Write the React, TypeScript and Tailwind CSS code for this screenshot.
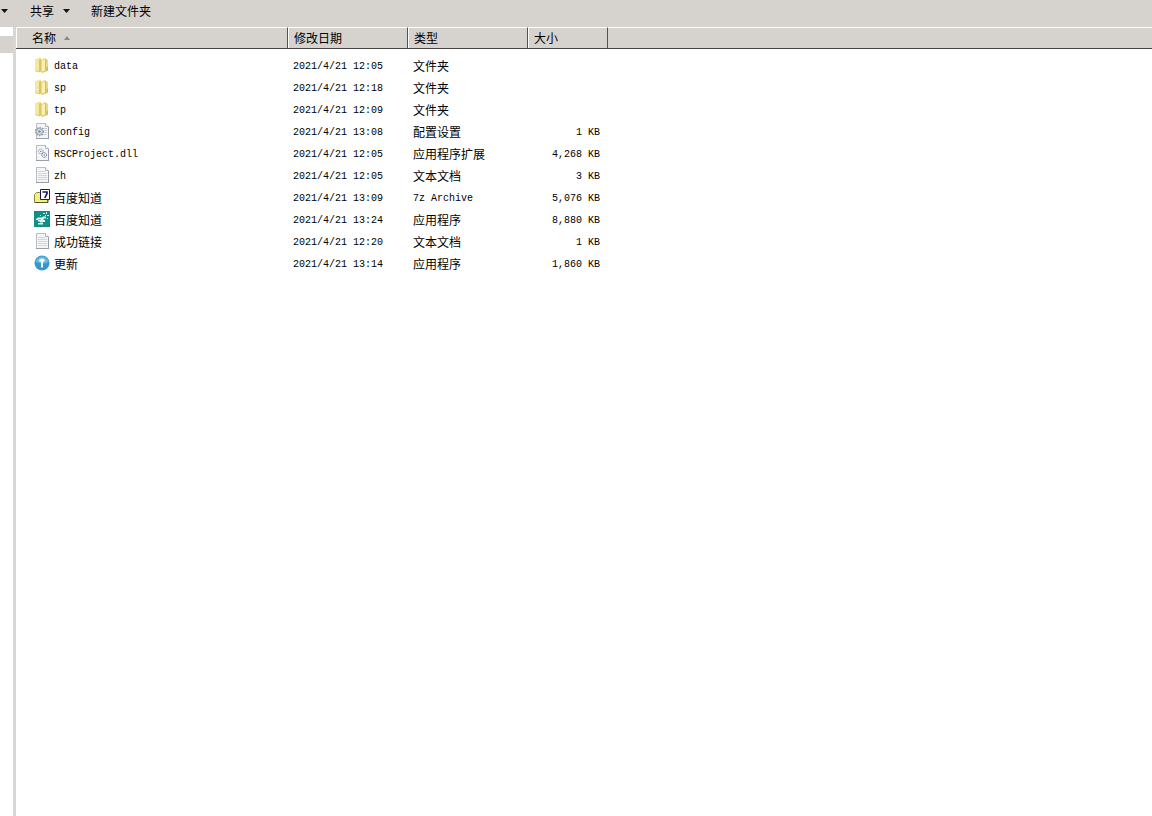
import { useState } from "react";
import { clsx } from "clsx";

/* File entry type */
interface FileEntry {
  icon: IconKind;
  name: string;
  modified: string;
  type: string;
  size: string;
}

type IconKind = "folder" | "config" | "dll" | "text" | "archive" | "app" | "update";

const files: FileEntry[] = [
  { icon: "folder", name: "data", modified: "2021/4/21 12:05", type: "文件夹", size: "" },
  { icon: "folder", name: "sp", modified: "2021/4/21 12:18", type: "文件夹", size: "" },
  { icon: "folder", name: "tp", modified: "2021/4/21 12:09", type: "文件夹", size: "" },
  { icon: "config", name: "config", modified: "2021/4/21 13:08", type: "配置设置", size: "1 KB" },
  { icon: "dll", name: "RSCProject.dll", modified: "2021/4/21 12:05", type: "应用程序扩展", size: "4,268 KB" },
  { icon: "text", name: "zh", modified: "2021/4/21 12:05", type: "文本文档", size: "3 KB" },
  { icon: "archive", name: "百度知道", modified: "2021/4/21 13:09", type: "7z Archive", size: "5,076 KB" },
  { icon: "app", name: "百度知道", modified: "2021/4/21 13:24", type: "应用程序", size: "8,880 KB" },
  { icon: "text", name: "成功链接", modified: "2021/4/21 12:20", type: "文本文档", size: "1 KB" },
  { icon: "update", name: "更新", modified: "2021/4/21 13:14", type: "应用程序", size: "1,860 KB" },
];

/* Latin text is set smaller so each glyph is half a Chinese character wide */
function Label({ text }: { text: string }) {
  const latin = /^[\x00-\x7f]*$/.test(text);
  return (
    <span
      className={clsx(
        "whitespace-pre",
        latin
          ? "pt-0.5 font-['Liberation_Mono',monospace] text-[10px]"
          : "font-['Noto_Sans_CJK_SC',sans-serif] text-xs"
      )}
    >
      {text}
    </span>
  );
}

function Caret() {
  return (
    <svg width="7" height="4" viewBox="0 0 7 4" aria-hidden="true">
      <path d="M0 0h7L3.5 4z" fill="#111" />
    </svg>
  );
}

/* Sheet of paper shared by the document icons */
function Sheet() {
  return (
    <>
      <path d="M2.5.5h9l3 3v12h-12z" fill="#f3f5f7" stroke="#b9bdc4" />
      <path d="M2 15.5h13M14.5 4v11" stroke="#999da6" />
      <path d="M11.5.5v3h3" fill="#fff" stroke="#b0b4bb" />
    </>
  );
}

function FileIcon({ kind }: { kind: IconKind }) {
  return (
    <svg width="16" height="16" viewBox="0 0 16 16" className="shrink-0" aria-hidden="true">
      {kind === "folder" && (
        <>
          <path d="M1 2.500L6 .5l1 1V14l-5 .5-1-1z" fill="#f1e495" />
          <path d="M1 2.500l4 .5v12l-4-1.500z" fill="#f4e9a4" />
          <path d="M5 3l2-1.500V14l-2 1z" fill="#dcc75c" />
          <path d="M7 3l4-2 3 2v10.500L8 15.500 7 14z" fill="#ead97e" />
          <path d="M8 4l3-1.500V13l-3 1.500z" fill="#f8f0b8" />
          <path d="M11 2.500l1-.5v11l-1 .5z" fill="#d5bf55" />
          <path d="M12.500 10l1.500-.5v3.500l-1.500.5z" fill="#b5bf80" />
          <path d="M1.500 13.500L5 15l2-1 1 1.500 6-2" fill="none" stroke="#d0b957" strokeWidth=".7" />
        </>
      )}
      {kind === "config" && (
        <>
          <Sheet />
          <path d="M9 5.500h4M11 7.500h2M11 9.500h2M9 11.500h4" stroke="#c9ced5" />
          <circle cx="5.500" cy="8.500" r="4" fill="none" stroke="#98a5b2" strokeWidth="1.500" strokeDasharray="1.600 1" />
          <circle cx="5.500" cy="8.500" r="3" fill="#e1e8ee" stroke="#8f9dab" />
          <circle cx="5.500" cy="8.500" r="1.200" fill="#748494" />
        </>
      )}
      {kind === "dll" && (
        <>
          <Sheet />
          <circle cx="6.800" cy="6.500" r="2.300" fill="#fff" stroke="#7d8998" strokeDasharray="1.400 .5" />
          <circle cx="6.800" cy="6.500" r=".8" fill="#717f90" />
          <circle cx="10.200" cy="10" r="2.300" fill="#fff" stroke="#66768a" strokeDasharray="1.400 .5" />
          <circle cx="10.200" cy="10" r=".8" fill="#66768a" />
        </>
      )}
      {kind === "text" && (
        <>
          <Sheet />
          <path d="M4 4.500h7M4 6.500h9M4 8.500h9M4 10.500h9M4 12.500h9" stroke="#d3d6da" />
        </>
      )}
      {kind === "archive" && (
        <>
          <path d="M.5 5.500l2-2h4v1h7v9H.5z" fill="#f1f277" stroke="#89894a" />
          <path d="M1 13.500h13V11" fill="none" stroke="#55552c" />
          <path d="M6.500.5h9v10h-9z" fill="#fff" stroke="#171760" />
          <path d="M8.500 3h4.500v1.500L10.800 9" fill="none" stroke="#171760" strokeWidth="1.700" />
        </>
      )}
      {kind === "app" && (
        <>
          <path d="M0 0h16v16H0z" fill="#128d87" />
          <path d="M2 8l2-1.500h4l1-1h3v2H9.500v1.500H11v2H9v2.500H4V12h2v-1.500H4V9H2z" fill="#e4f7f3" />
          <path d="M9 2h2v1H9zM12 1h1v2h-1zM13 4h2v1h-2zM11 4h1v1h-1zM13 7h1v1h-1zM6 4h1v1H6z" fill="#d0efea" />
          <path d="M4 8.500h3M6 11.500h3" stroke="#6fc2b9" />
        </>
      )}
      {kind === "update" && (
        <>
          <circle cx="8" cy="8" r="7.500" fill="#3796d2" />
          <path d="M1.500 7Q3 1.500 8 1.500T14.500 7Q11 9 8 8.500T1.500 7z" fill="#67b5e1" />
          <path d="M8 3.500c2 0 3 1 3 2.500L9 7v5.500H7V7L5 6c0-1.500 1-2.500 3-2.500z" fill="#f6fcff" />
        </>
      )}
    </svg>
  );
}

const headCell =
  "h-[22px] border-t border-r border-b border-t-white border-r-[#55524e] border-b-[#454340] p-0 font-normal";
const headButton =
  "flex h-5 w-full items-center gap-2 border-l border-white text-left";

export default function App() {
  const [selected, setSelected] = useState<number | null>(null);

  return (
    <div className="flex min-h-screen flex-col bg-white font-['Noto_Sans_CJK_SC',sans-serif] text-xs text-black">
      {/* Toolbar */}
      <header className="flex h-[27px] items-center bg-[#d6d3ce] pb-1.5">
        <button className="flex h-5 w-[30px] items-center pl-px" aria-label="更多">
          <Caret />
        </button>
        <button className="flex items-center gap-[9px]">
          共享
          <Caret />
        </button>
        <button className="ml-[21px]">新建文件夹</button>
      </header>

      <div className="flex flex-1">
        {/* Edge of the navigation pane */}
        <aside className="w-[13px] shrink-0 pt-[9px]">
          <div className="h-[17px] bg-[#d6d3ce]" />
        </aside>
        <div className="w-[3px] shrink-0 bg-[#d9d7d5]" />

        {/* File list */}
        <main className="min-w-0 flex-1">
          <table className="w-full table-fixed border-separate border-spacing-0">
            <colgroup>
              <col className="w-[272px]" />
              <col className="w-[120px]" />
              <col className="w-[120px]" />
              <col className="w-[80px]" />
              <col />
            </colgroup>
            <thead className="bg-[#d6d3ce]">
              <tr>
                <th scope="col" aria-sort="ascending" className={headCell}>
                  <button className={clsx(headButton, "pl-[15px]")}>
                    名称
                    <svg width="6" height="4" viewBox="0 0 6 4" aria-hidden="true">
                      <path d="M0 4h6L3 0z" fill="#8c8985" />
                    </svg>
                  </button>
                </th>
                <th scope="col" className={headCell}>
                  <button className={clsx(headButton, "pl-[5px]")}>修改日期</button>
                </th>
                <th scope="col" className={headCell}>
                  <button className={clsx(headButton, "pl-[5px]")}>类型</button>
                </th>
                <th scope="col" className={headCell}>
                  <button className={clsx(headButton, "pl-[5px]")}>大小</button>
                </th>
                <td className="border-t border-b border-t-white border-b-[#454340] p-0" />
              </tr>
            </thead>
            <tbody className="before:block before:h-[6px] before:content-['']">
              {files.map((file, i) => (
                <tr
                  key={i}
                  className={clsx("h-[22px]", selected === i && "bg-[#e4ecf7]")}
                  onClick={() => setSelected(i)}
                >
                  <td className="p-0 pl-[18px]">
                    <div className="flex h-[22px] items-center gap-1">
                      <span className="pb-0.5">
                        <FileIcon kind={file.icon} />
                      </span>
                      <Label text={file.name} />
                    </div>
                  </td>
                  <td className="p-0 pl-[5px]">
                    <div className="flex h-[22px] items-center">
                      <Label text={file.modified} />
                    </div>
                  </td>
                  <td className="p-0 pl-[5px]">
                    <div className="flex h-[22px] items-center">
                      <Label text={file.type} />
                    </div>
                  </td>
                  <td className="p-0 pr-2">
                    <div className="flex h-[22px] items-center justify-end">
                      <Label text={file.size} />
                    </div>
                  </td>
                  <td className="p-0" />
                </tr>
              ))}
            </tbody>
          </table>
        </main>
      </div>
    </div>
  );
}
